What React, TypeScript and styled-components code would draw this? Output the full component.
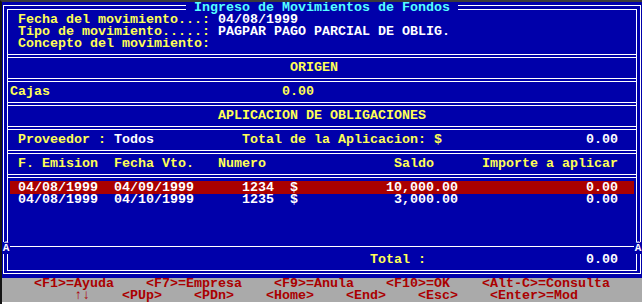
import React from "react";
import styled, { createGlobalStyle } from "styled-components";

// standard text-mode palette
const DOS = {
  blue: "#0000aa",
  red: "#aa0000",
  gray: "#aaaaaa",
  yellow: "#ffff55",
  white: "#ffffff",
  cyan: "#55ffff",
};

type Tone = "yellow" | "white" | "cyan" | "red";

type Movement = {
  emision: string;
  vto: string;
  numero: string;
  saldo: string;
  importe: string;
};

const movements: Array<Movement> = [
  { emision: "04/08/1999", vto: "04/09/1999", numero: "1234", saldo: "10,000.00", importe: "0.00" },
  { emision: "04/08/1999", vto: "04/10/1999", numero: "1235", saldo: "3,000.00", importe: "0.00" },
];

const GlobalStyle = createGlobalStyle`
  html, body {
    margin: 0;
    padding: 0;
    background: #ffffff;
  }
`;

const Page = styled.div`
  width: 640px;
  padding-bottom: 2px;
  border-top: 2px solid #3a3a3a;
  border-left: 2px solid #141414;
  font-family: "Liberation Mono", "DejaVu Sans Mono", monospace;
  font-size: 13.3333px;
  font-weight: bold;
`;

const Screen = styled.div`
  position: relative;
  box-sizing: border-box;
  height: 276px;
  padding: 3px 1px 4px;
  background: ${DOS.blue};
`;

const Frame = styled.div`
  box-sizing: border-box;
  height: 100%;
  padding: 3px 3px 2px;
  border: 1px solid ${DOS.white};
`;

const Panel = styled.div`
  box-sizing: border-box;
  display: flex;
  flex-direction: column;
  height: 100%;
  border: 1px solid ${DOS.white};
`;

const Box = styled.div`
  margin-top: 2px;
  padding: 4px 0;
  border-top: 1px solid ${DOS.white};
  border-bottom: 1px solid ${DOS.white};
`;

const HeaderBox = styled(Box)`
  margin-top: 0;
  border-top: none;
`;

const ListBox = styled(Box)`
  flex: 1;
`;

const TotalBox = styled.div`
  padding: 7px 0 4px;
`;

const TitleBar = styled.div`
  position: absolute;
  top: 0;
  left: 0;
  right: 0;
  display: flex;
  justify-content: center;
  line-height: 12px;
`;

const Title = styled.span`
  padding: 0 8px;
  background: ${DOS.blue};
  color: ${DOS.cyan};
  white-space: pre;
`;

const Junction = styled.span<{ $side: "left" | "right" }>`
  position: absolute;
  top: 240px;
  ${(p) => p.$side}: 0;
  width: 8px;
  height: 12px;
  background: ${DOS.blue};
  color: ${DOS.white};
  font-size: 11px;
  line-height: 12px;
  text-align: center;
`;

const Line = styled.div<{ $cols: number; $selected?: boolean }>`
  display: grid;
  grid-template-columns: repeat(${(p) => p.$cols}, 8px);
  grid-auto-columns: 8px;
  height: 12px;
  margin: 0 2px;
  line-height: 12px;
  white-space: pre;
  background: ${(p) => (p.$selected ? DOS.red : "transparent")};
  box-shadow: ${(p) => (p.$selected ? `0 -1px 0 ${DOS.red}` : "none")};
`;

const StatusBar = styled.div`
  height: 24px;
  background: ${DOS.gray};
`;

const StatusLine = styled(Line)`
  margin: 0;
`;

const Cell = styled.span<{ $col: number; $span: number; $tone: Tone }>`
  grid-row: 1;
  grid-column: ${(p) => p.$col} / span ${(p) => p.$span};
  color: ${(p) => DOS[p.$tone]};
`;

type TextProps = { col: number; tone?: Tone; children: string };

const Text = ({ col, tone = "yellow", children }: TextProps): JSX.Element => (
  <Cell $col={col} $span={children.length} $tone={tone}>
    {children}
  </Cell>
);

// right aligned figure ending on column `end`
const Amount = ({ end, tone = "white", children }: { end: number; tone?: Tone; children: string }): JSX.Element => (
  <Text col={end - children.length + 1} tone={tone}>
    {children}
  </Text>
);

const keysTop: Array<[number, string]> = [
  [5, "<F1>=Ayuda"],
  [19, "<F7>=Empresa"],
  [35, "<F9>=Anula"],
  [49, "<F10>=OK"],
  [61, "<Alt-C>=Consulta"],
];

const keysBottom: Array<[number, string]> = [
  [10, "↑↓"],
  [16, "<PUp>"],
  [25, "<PDn>"],
  [34, "<Home>"],
  [44, "<End>"],
  [53, "<Esc>"],
  [62, "<Enter>=Mod"],
];

const App = (): JSX.Element => {
  return (
    <>
      <GlobalStyle />
      <Page>
        <Screen>
          <Frame>
            <Panel>
              <HeaderBox>
                <Line $cols={78}>
                  <Text col={2}>Fecha del movimiento...:</Text>
                  <Text col={27} tone="white">04/08/1999</Text>
                </Line>
                <Line $cols={78}>
                  <Text col={2}>Tipo de movimiento.....:</Text>
                  <Text col={27} tone="white">PAGPAR PAGO PARCIAL DE OBLIG.</Text>
                </Line>
                <Line $cols={78}>
                  <Text col={2}>Concepto del movimiento:</Text>
                </Line>
              </HeaderBox>

              <Box>
                <Line $cols={78}>
                  <Text col={36}>ORIGEN</Text>
                </Line>
              </Box>

              <Box>
                <Line $cols={78}>
                  <Text col={1}>Cajas</Text>
                  <Amount end={38} tone="yellow">0.00</Amount>
                </Line>
              </Box>

              <Box>
                <Line $cols={78}>
                  <Text col={27}>APLICACION DE OBLIGACIONES</Text>
                </Line>
              </Box>

              <Box>
                <Line $cols={78}>
                  <Text col={2}>Proveedor :</Text>
                  <Text col={14} tone="white">Todos</Text>
                  <Text col={30}>Total de la Aplicacion: $</Text>
                  <Amount end={76}>0.00</Amount>
                </Line>
              </Box>

              <Box>
                <Line $cols={78}>
                  <Text col={2}>F. Emision</Text>
                  <Text col={14}>Fecha Vto.</Text>
                  <Text col={27}>Numero</Text>
                  <Text col={49}>Saldo</Text>
                  <Text col={60}>Importe a aplicar</Text>
                </Line>
              </Box>

              <ListBox>
                {movements.map((m: Movement, i: number) => (
                  <Line $cols={78} $selected={i === 0} key={m.numero}>
                    <Text col={2} tone="white">{m.emision}</Text>
                    <Text col={14} tone="white">{m.vto}</Text>
                    <Amount end={33}>{m.numero}</Amount>
                    <Text col={36} tone="white">$</Text>
                    <Amount end={56}>{m.saldo}</Amount>
                    <Amount end={76}>{m.importe}</Amount>
                  </Line>
                ))}
              </ListBox>

              <TotalBox>
                <Line $cols={78}>
                  <Text col={46}>Total :</Text>
                  <Amount end={76}>0.00</Amount>
                </Line>
              </TotalBox>
            </Panel>
          </Frame>

          <TitleBar>
            <Title>Ingreso de Movimientos de Fondos</Title>
          </TitleBar>
          <Junction $side="left">Â</Junction>
          <Junction $side="right">Â</Junction>
        </Screen>

        <StatusBar>
          <StatusLine $cols={80}>
            {keysTop.map(([col, label]) => (
              <Text col={col} tone="red" key={label}>{label}</Text>
            ))}
          </StatusLine>
          <StatusLine $cols={80}>
            {keysBottom.map(([col, label]) => (
              <Text col={col} tone="red" key={label}>{label}</Text>
            ))}
          </StatusLine>
        </StatusBar>
      </Page>
    </>
  );
};

export default App;
